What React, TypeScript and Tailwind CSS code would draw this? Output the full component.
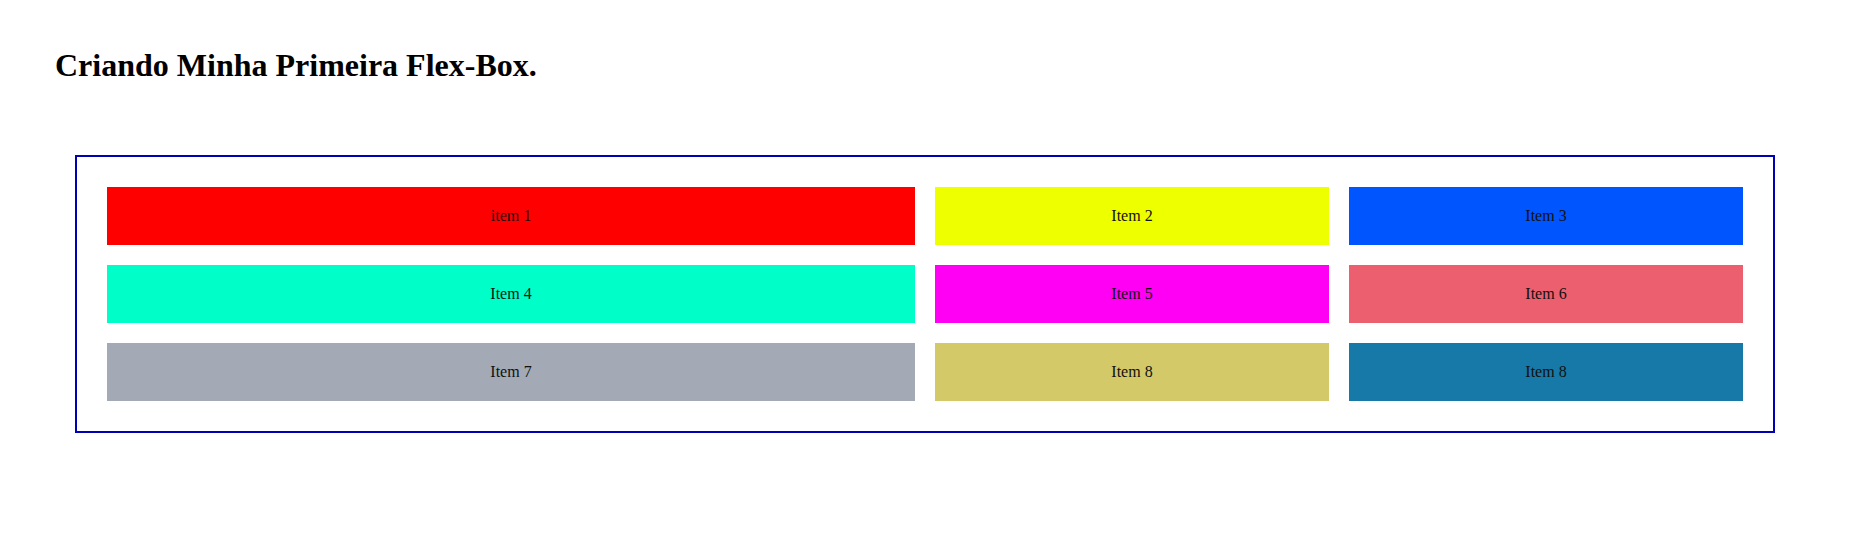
import React from "react";

const items = [
  { label: "item 1", bg: "bg-[#ff0000]" },
  { label: "Item 2", bg: "bg-[#eeff00]" },
  { label: "Item 3", bg: "bg-[#0055ff]" },
  { label: "Item 4", bg: "bg-[#00ffc8]" },
  { label: "Item 5", bg: "bg-[#ff00f5]" },
  { label: "Item 6", bg: "bg-[#eb5f6e]" },
  { label: "Item 7", bg: "bg-[#a3aab5]" },
  { label: "Item 8", bg: "bg-[#d4c968]" },
  { label: "Item 8", bg: "bg-[#1779a7]" },
];

export default function App() {
  return (
    <div className="min-h-[542px] bg-white text-black font-['Liberation_Serif','Times_New_Roman',serif]">
      {/* Title */}
      <h1 className="px-[55px] pt-[47px] text-[32px] leading-[37px] font-bold">
        Criando Minha Primeira Flex-Box.
      </h1>

      {/* Flex container */}
      <div className="mt-[71px] ml-[75px] mr-[74px] border-2 border-[#0000b4] p-[30px]">
        <div className="grid grid-cols-[808fr_394fr_394fr] gap-5">
          {items.map((item, idx) => (
            <div
              key={idx}
              className={`h-[58px] flex items-center justify-center text-[16px] text-[#111] ${item.bg}`}
            >
              {item.label}
            </div>
          ))}
        </div>
      </div>
    </div>
  );
}
